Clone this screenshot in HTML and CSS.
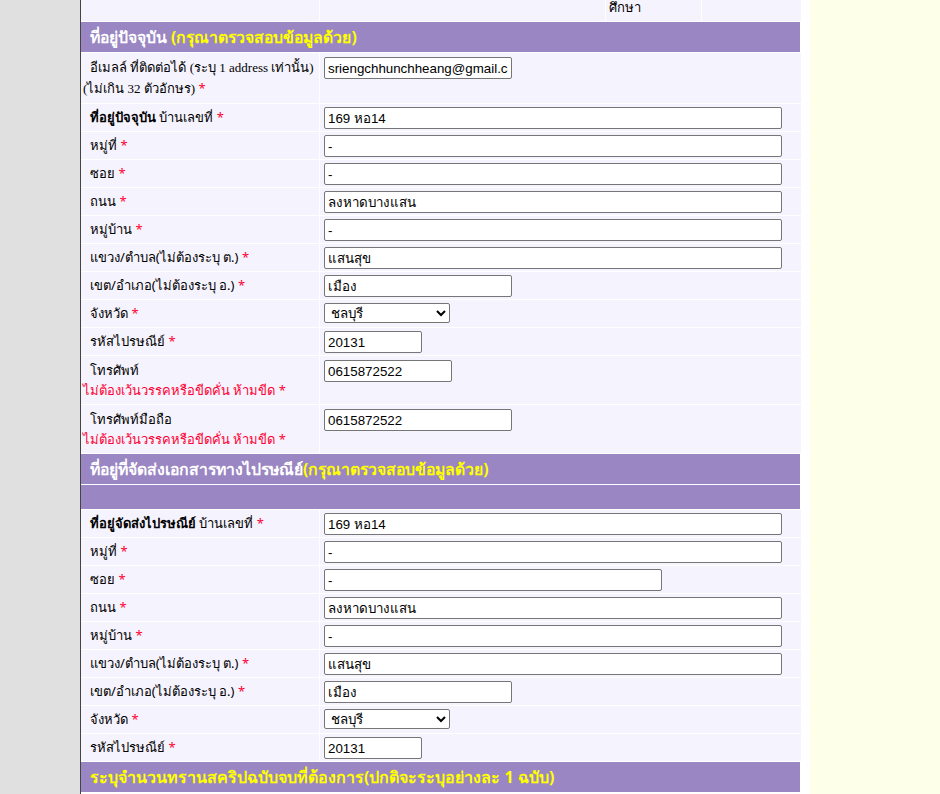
FILE: index.html
```html
<!DOCTYPE html>
<html lang="th">
<head>
<meta charset="utf-8">
<title>ที่อยู่</title>
<link rel="stylesheet" href="styles.css">
</head>
<body>
<div class="page">
  <div class="side-left"></div>
  <main class="main">
    <table class="top-row">
      <tr>
        <td class="tc1"></td>
        <td class="tc2"></td>
        <td class="tc3">ศึกษา</td>
        <td class="tc4"></td>
      </tr>
    </table>
    <table class="form">
      <colgroup><col class="col-label"><col></colgroup>
      <tr><th colspan="2" class="head"><span class="w">ที่อยู่ปัจจุบัน</span> <span class="y">(กรุณาตรวจสอบข้อมูลด้วย)</span></th></tr>
      <tr class="tall">
        <td class="lbl"><span class="ind nowrap">อีเมลล์ ที่ติดต่อได้ <span class="serif">(ระบุ 1 address เท่านั้น)</span></span><br><span class="serif">(ไม่เกิน 32 ตัวอักษร)</span> <span class="req">*</span></td>
        <td class="fld"><input class="w188" type="text" value="sriengchhunchheang@gmail.com"></td>
      </tr>
      <tr><td class="lbl"><span class="ind"><b>ที่อยู่ปัจจุบัน</b> บ้านเลขที่ <span class="req">*</span></span></td><td class="fld"><input class="w458" type="text" value="169 หอ14"></td></tr>
      <tr><td class="lbl"><span class="ind">หมู่ที่ <span class="req">*</span></span></td><td class="fld"><input class="w458" type="text" value="-"></td></tr>
      <tr><td class="lbl"><span class="ind">ซอย <span class="req">*</span></span></td><td class="fld"><input class="w458" type="text" value="-"></td></tr>
      <tr><td class="lbl"><span class="ind">ถนน <span class="req">*</span></span></td><td class="fld"><input class="w458" type="text" value="ลงหาดบางแสน"></td></tr>
      <tr><td class="lbl"><span class="ind">หมู่บ้าน <span class="req">*</span></span></td><td class="fld"><input class="w458" type="text" value="-"></td></tr>
      <tr><td class="lbl"><span class="ind">แขวง/ตำบล(ไม่ต้องระบุ ต.) <span class="req">*</span></span></td><td class="fld"><input class="w458" type="text" value="แสนสุข"></td></tr>
      <tr><td class="lbl"><span class="ind">เขต/อำเภอ(ไม่ต้องระบุ อ.) <span class="req">*</span></span></td><td class="fld"><input class="w188" type="text" value="เมือง"></td></tr>
      <tr><td class="lbl"><span class="ind">จังหวัด <span class="req">*</span></span></td><td class="fld"><select class="w126"><option>ชลบุรี</option></select></td></tr>
      <tr><td class="lbl"><span class="ind">รหัสไปรษณีย์ <span class="req">*</span></span></td><td class="fld"><input class="w98" type="text" value="20131"></td></tr>
      <tr class="tall">
        <td class="lbl"><span class="ind">โทรศัพท์</span><br><span class="note">ไม่ต้องเว้นวรรคหรือขีดคั่น ห้ามขีด *</span></td>
        <td class="fld"><input class="w128" type="text" value="0615872522"></td>
      </tr>
      <tr class="tall">
        <td class="lbl"><span class="ind">โทรศัพท์มือถือ</span><br><span class="note">ไม่ต้องเว้นวรรคหรือขีดคั่น ห้ามขีด *</span></td>
        <td class="fld"><input class="w188" type="text" value="0615872522"></td>
      </tr>
      <tr><th colspan="2" class="head"><span class="w">ที่อยู่ที่จัดส่งเอกสารทางไปรษณีย์</span><span class="y">(กรุณาตรวจสอบข้อมูลด้วย)</span></th></tr>
      <tr><th colspan="2" class="head-empty"></th></tr>
      <tr><td class="lbl"><span class="ind"><b>ที่อยู่จัดส่งไปรษณีย์</b> บ้านเลขที่ <span class="req">*</span></span></td><td class="fld"><input class="w458" type="text" value="169 หอ14"></td></tr>
      <tr><td class="lbl"><span class="ind">หมู่ที่ <span class="req">*</span></span></td><td class="fld"><input class="w458" type="text" value="-"></td></tr>
      <tr><td class="lbl"><span class="ind">ซอย <span class="req">*</span></span></td><td class="fld"><input class="w338" type="text" value="-"></td></tr>
      <tr><td class="lbl"><span class="ind">ถนน <span class="req">*</span></span></td><td class="fld"><input class="w458" type="text" value="ลงหาดบางแสน"></td></tr>
      <tr><td class="lbl"><span class="ind">หมู่บ้าน <span class="req">*</span></span></td><td class="fld"><input class="w458" type="text" value="-"></td></tr>
      <tr><td class="lbl"><span class="ind">แขวง/ตำบล(ไม่ต้องระบุ ต.) <span class="req">*</span></span></td><td class="fld"><input class="w458" type="text" value="แสนสุข"></td></tr>
      <tr><td class="lbl"><span class="ind">เขต/อำเภอ(ไม่ต้องระบุ อ.) <span class="req">*</span></span></td><td class="fld"><input class="w188" type="text" value="เมือง"></td></tr>
      <tr><td class="lbl"><span class="ind">จังหวัด <span class="req">*</span></span></td><td class="fld"><select class="w126"><option>ชลบุรี</option></select></td></tr>
      <tr><td class="lbl"><span class="ind">รหัสไปรษณีย์ <span class="req">*</span></span></td><td class="fld"><input class="w98" type="text" value="20131"></td></tr>
      <tr><th colspan="2" class="head head-last"><span class="y">ระบุจำนวนทรานสคริปฉบับจบที่ต้องการ(ปกติจะระบุอย่างละ 1 ฉบับ)</span></th></tr>
    </table>
  </main>
  <div class="gap"></div>
  <div class="side-right"></div>
</div>
</body>
</html>
```

FILE: styles.css
```css
html, body {
  margin: 0;
  padding: 0;
  height: 100%;
  overflow: hidden;
}
body {
  font-family: Tahoma, "Noto Sans", "DejaVu Sans", sans-serif;
  font-size: 13px;
  color: #000;
}
.page {
  display: flex;
  height: 794px;
}
.side-left {
  width: 80px;
  flex: none;
  background: #e0e0e0;
  border-right: 1px solid #444;
}
.main {
  width: 720px;
  flex: none;
  background: #fff;
}
.gap {
  width: 9px;
  flex: none;
  background: #fff;
}
.side-right {
  flex: 1;
  background: #fdffe9;
}
table {
  border-collapse: separate;
  border-spacing: 0;
  width: 720px;
  table-layout: fixed;
}
.top-row td {
  height: 21px;
  padding: 0;
  background: #f5f3fd;
  border-right: 1px solid #fff;
  vertical-align: top;
}
.top-row .tc1 { width: 238px; }
.top-row .tc2 { width: 285px; }
.top-row .tc3 { width: 92px; padding-left: 3px; line-height: 15px; }
.top-row .tc4 { border-right: none; }
.form td, .form th {
  background: #f5f3fd;
  border-top: 1px solid #fff;
  border-right: 1px solid #fff;
  vertical-align: top;
  padding: 0;
}
.form td:last-child { border-right: none; }
.col-label { width: 239px; }
.lbl {
  padding: 3px 2px 2px 2px !important;
  line-height: 20px;
}
.ind { padding-left: 7px; }
.nowrap { white-space: nowrap; }
.tall .lbl { padding-top: 4px !important; padding-bottom: 4px !important; }
.tall .fld { padding-top: 4px !important; }
.fld {
  padding: 3px 0 2px 4px !important;
}
.serif {
  font-family: "Liberation Serif", "Times New Roman", serif;
  font-size: 13px;
}
.req { color: #ff0033; }
.note { color: #ff0033; }
.head {
  background: #9a86c3 !important;
  text-align: left;
  font-size: 15.8px;
  font-weight: bold;
  height: 30px;
  padding: 0 0 0 9px !important;
  vertical-align: middle !important;
  white-space: nowrap;
}
.head-last { font-size: 16px; }
.head-empty {
  background: #9a86c3 !important;
  height: 24px;
}
.w { color: #fff; }
.y { color: #ffff00; }
input, select {
  display: block;
  box-sizing: border-box;
  height: 22px;
  font-family: Arial, "Liberation Sans", sans-serif;
  font-size: 13.33px;
  border: 1px solid #767676;
  border-radius: 2px;
  padding: 1px 3px;
  background: #fff;
  color: #000;
  margin: 0;
}
select { height: 20px; padding: 0 0 0 2px; margin-bottom: 2px; }
.w458 { width: 458px; }
.w338 { width: 338px; }
.w188 { width: 188px; }
.w128 { width: 128px; }
.w126 { width: 126px; }
.w98 { width: 98px; }
```
